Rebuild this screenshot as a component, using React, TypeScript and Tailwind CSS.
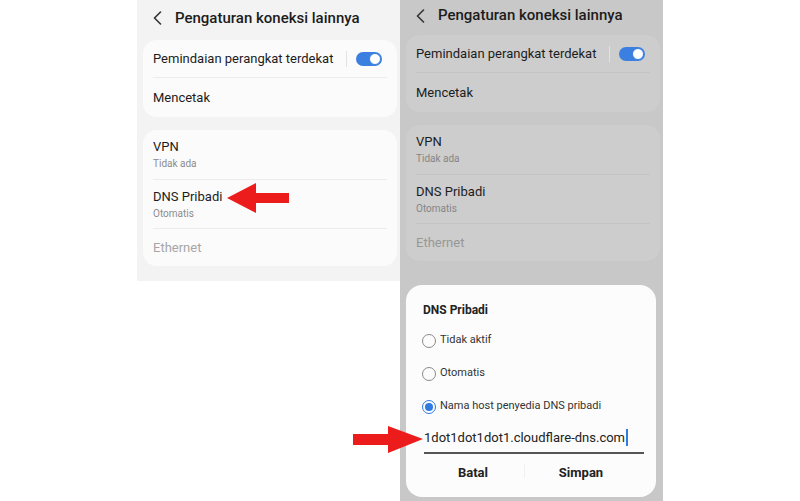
const font = { fontFamily: "Roboto, 'Noto Sans', sans-serif" };

function Chevron({ color }: { color: string }) {
  return (
    <svg width="9" height="14" viewBox="0 0 9 14" className="shrink-0">
      <polyline points="7.5,1 1.5,7 7.5,13" fill="none" stroke={color} strokeWidth="1.6" strokeLinecap="round" strokeLinejoin="round" />
    </svg>
  );
}

function Toggle() {
  return (
    <div className="flex items-center gap-[9px]">
      <div className="w-px h-[16px] bg-[#e2e2e2]" />
      <div className="w-[26px] h-[14px] rounded-full bg-[#3b7fe0] flex items-center justify-end pr-[1px]">
        <div className="w-[12px] h-[12px] rounded-full bg-white border border-[#3b7fe0]" />
      </div>
    </div>
  );
}

function SettingsScreen({ dim }: { dim: boolean }) {
  const bg = dim ? "bg-[#cdcdcd]" : "bg-[#fbfbfb]";
  const line = dim ? "border-[#c3c3c3]" : "border-[#ececec]";
  const sub = dim ? "text-[#858585]" : "text-[#8c8c8c]";
  const off = dim ? "text-[#979797]" : "text-[#a6a6a6]";
  return (
    <>
      <div className={`flex items-center gap-[13px] pl-[10px] ${dim ? "h-[31px]" : "h-[36px]"}`}>
        <Chevron color="#333" />
        <span className="text-[15px] font-medium text-[#1c1c1c]">Pengaturan koneksi lainnya</span>
      </div>
      <div className={`mt-[4px] w-[254px] rounded-[14px] px-[10px] ${bg}`}>
        <div className={`h-[38px] flex items-center justify-between border-b ${line}`}>
          <span className="text-[13px] text-[#1c1c1c]">Pemindaian perangkat terdekat</span>
          <div className="pr-[5px]">
            <Toggle />
          </div>
        </div>
        <div className="h-[39px] flex items-center">
          <span className="text-[13px] text-[#1c1c1c]">Mencetak</span>
        </div>
      </div>
      <div className={`mt-[13px] w-[254px] rounded-[14px] px-[10px] ${bg}`}>
        <div className={`h-[50px] pt-[2px] flex flex-col justify-center border-b ${line}`}>
          <span className="text-[13px] leading-[16px] text-[#1c1c1c]">VPN</span>
          <span className={`text-[10px] leading-[17px] ${sub}`}>Tidak ada</span>
        </div>
        <div className={`h-[49px] pt-[2px] flex flex-col justify-center border-b ${line}`}>
          <span className="text-[13px] leading-[16px] text-[#1c1c1c]">DNS Pribadi</span>
          <span className={`text-[10px] leading-[17px] ${sub}`}>Otomatis</span>
        </div>
        <div className="h-[37px] pt-[1px] flex items-center">
          <span className={`text-[13px] ${off}`}>Ethernet</span>
        </div>
      </div>
    </>
  );
}

function Radio({ checked, label }: { checked?: boolean; label: string }) {
  return (
    <div className="h-[33px] flex items-center gap-[4px]">
      {checked ? (
        <div className="w-[14px] h-[14px] rounded-full border-[1.5px] border-[#2f7be0] flex items-center justify-center">
          <div className="w-[8px] h-[8px] rounded-full bg-[#2f7be0]" />
        </div>
      ) : (
        <div className="w-[14px] h-[14px] rounded-full border border-[#8a8a8a]" />
      )}
      <span className="text-[11px] text-[#333]">{label}</span>
    </div>
  );
}

export default function App() {
  return (
    <div className="relative w-[800px] h-[501px] bg-white flex pl-[137px] overflow-hidden" style={font}>
      <div className="w-[263px] h-[281px] bg-[#f3f3f3] flex flex-col pl-[6px]">
        <SettingsScreen dim={false} />
      </div>

      <div className="w-[263px] h-[501px] bg-[#c8c8c8] flex flex-col pl-[6px]">
        <SettingsScreen dim={true} />
        <div className="mt-[24px] w-[250px] h-[212px] rounded-[16px] bg-[#fcfcfc] flex flex-col pt-[17px]">
          <div className="h-[16px] pl-[17px] flex items-center text-[12px] font-bold text-[#222]">DNS Pribadi</div>
          <div className="mt-[6px] pl-[16px] flex flex-col">
            <Radio label="Tidak aktif" />
            <Radio label="Otomatis" />
            <Radio checked label="Nama host penyedia DNS pribadi" />
          </div>
          <div className="ml-[18px] mr-[12px] h-[31px] flex items-center border-b-2 border-[#555]">
            <span className="text-[13px] text-[#222]">1dot1dot1dot1.cloudflare-dns.com</span>
            <span className="w-[1.5px] h-[17px] bg-[#2f7be0] ml-[1px]" />
          </div>
          <div className="ml-[13px] w-[216px] h-[38px] grid grid-cols-2 items-center">
            <div className="flex justify-center text-[13px] font-bold text-[#222]">Batal</div>
            <div className="relative flex justify-center text-[13px] font-bold text-[#222]">
              <div className="absolute left-[-3px] top-[1px] w-px h-[14px] bg-[#f0f0f0]" />
              Simpan
            </div>
          </div>
        </div>
      </div>

      <svg className="absolute left-0 top-0 pointer-events-none" width="800" height="501">
        <polygon points="227,198 256,183 256,193 289,193 289,203 256,203 256,213" fill="#ec1c1c" />
        <polygon points="353,434 388,434 388,426 423,439 388,453 388,445 353,445" fill="#ec1c1c" />
      </svg>
    </div>
  );
}
